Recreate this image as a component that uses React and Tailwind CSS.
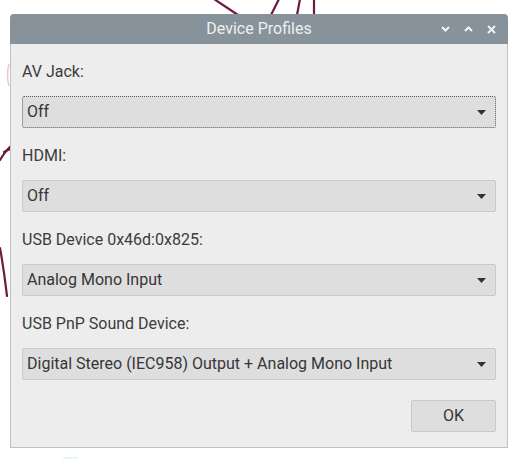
import React from "react";

function Combo({ value, focused }) {
  return (
    <div
      className={
        "flex h-[32px] items-center justify-between rounded-[2px] bg-[#dedede] pl-[4px] pr-[9px] text-[16px] text-[#363636] " +
        (focused ? "border border-dotted border-[#5a5a5a]" : "border border-[#c9c9c9]")
      }
    >
      <span className="leading-none">{value}</span>
      <svg width="9" height="5" viewBox="0 0 9 5" className="mt-[1px]">
        <path d="M0 0 L9 0 L4.5 5 Z" fill="#333333" />
      </svg>
    </div>
  );
}

function Field({ label, value, focused }) {
  return (
    <div className="mb-[18px] flex flex-col">
      <div className="mb-[14px] h-[20px] text-[16px] leading-[20px] text-[#3c3c3c]">{label}</div>
      <Combo value={value} focused={focused} />
    </div>
  );
}

export default function App() {
  return (
    <div
      className="relative h-[462px] w-[521px] overflow-hidden bg-white"
      style={{ fontFamily: "Roboto, 'Liberation Sans', sans-serif" }}
    >
      <svg className="absolute inset-0" width="521" height="462" viewBox="0 0 521 462">
        <g stroke="#6e1a3c" strokeWidth="2.2" fill="none" strokeLinecap="round">
          <path d="M214 -1 L238 15" />
          <path d="M279 -1 L271 15" />
          <path d="M300 -1 L297 15" />
          <path d="M314 -1 L314 15" />
          <path d="M0 160 Q6 150 13 144" />
          <path d="M4 152 L12 148" />
          <path d="M0 248 Q4 270 7 296" />
        </g>
        <path d="M9 64 Q6 75 9 86" stroke="#f3c6cf" strokeWidth="1.5" fill="none" />
        <path d="M63 458 L78 458" stroke="#e6f7f4" strokeWidth="2" />
      </svg>

      <div className="absolute left-[10px] top-[14px] flex h-[434px] w-[498px] flex-col">
        <div className="relative flex h-[30px] items-center justify-center rounded-t-[4px] bg-[#87929a]">
          <span className="text-[16px] text-[#eef0f1]">Device Profiles</span>
          <div className="absolute right-[12px] top-0 flex h-full items-center gap-[14px]">
            <svg width="9" height="6" viewBox="0 0 9 6">
              <path d="M1 1 L4.5 4.5 L8 1" stroke="#f3f4f5" strokeWidth="2" fill="none" />
            </svg>
            <svg width="9" height="6" viewBox="0 0 9 6">
              <path d="M1 5 L4.5 1.5 L8 5" stroke="#f3f4f5" strokeWidth="2" fill="none" />
            </svg>
            <svg width="9" height="9" viewBox="0 0 9 9">
              <path d="M1 1 L8 8 M8 1 L1 8" stroke="#f3f4f5" strokeWidth="2" fill="none" />
            </svg>
          </div>
        </div>
        <div className="flex flex-1 flex-col border-x border-b border-[#c2c2c2] bg-[#ededed] px-[11px] pt-[18px]">
          <Field label="AV Jack:" value="Off" focused />
          <Field label="HDMI:" value="Off" />
          <Field label="USB Device 0x46d:0x825:" value="Analog Mono Input" />
          <Field label="USB PnP Sound Device:" value="Digital Stereo (IEC958) Output + Analog Mono Input" />
          <div className="mt-[2px] flex justify-end">
            <div className="flex h-[32px] w-[85px] items-center justify-center rounded-[2px] border border-[#c9c9c9] bg-[#dedede] text-[16px] text-[#363636]">
              OK
            </div>
          </div>
        </div>
      </div>
    </div>
  );
}
